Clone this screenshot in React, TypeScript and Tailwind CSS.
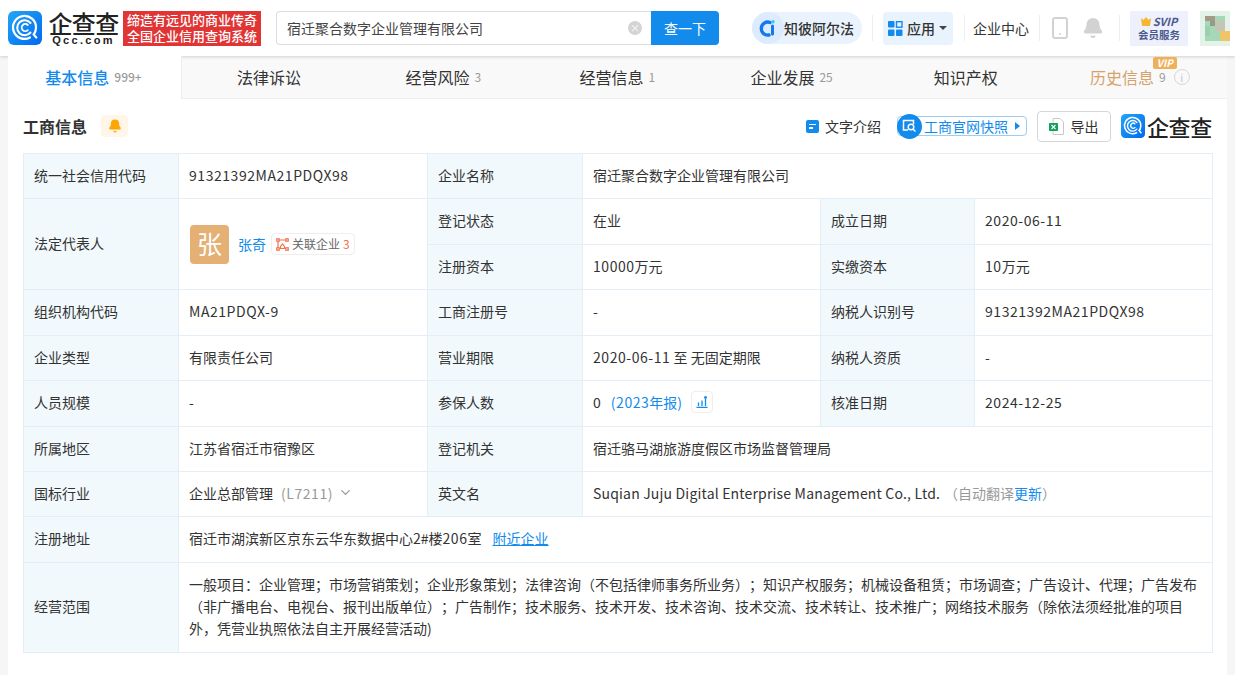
import { ReactNode } from 'react'
import { Bell, ChevronDown, Smartphone } from 'lucide-react'

const font = { fontFamily: '"Noto Sans CJK SC", sans-serif' }

function LogoMark({ size }: { size: number }) {
  return (
    <svg width={size} height={size} viewBox="0 0 34 34" className="shrink-0">
      <defs>
        <linearGradient id="qcc" x1="0" y1="0" x2="1" y2="1">
          <stop offset="0" stopColor="#22a6f5" />
          <stop offset="1" stopColor="#0069f0" />
        </linearGradient>
      </defs>
      <rect width="34" height="34" rx="6" fill="url(#qcc)" />
      <path d="M22 26.500A11.500 11.500 0 1 1 28 16.500c0 2.600-.8 5-2.300 7l2.600 3" fill="none" stroke="#fff" strokeWidth="2.200" strokeLinecap="round" />
      <path d="M22.500 21.500A7.500 7.500 0 1 1 22.500 12" fill="none" stroke="#fff" strokeWidth="2" strokeLinecap="round" />
      <path d="M19.800 19.200A3.600 3.600 0 1 1 19.800 14" fill="none" stroke="#fff" strokeWidth="1.800" strokeLinecap="round" />
    </svg>
  )
}

function Divider() {
  return <div className="h-[26px] w-px bg-[#eeeeee]" />
}

function Num({ children }: { children: ReactNode }) {
  return <span className="tracking-[0.55px]">{children}</span>
}

function Header() {
  return (
    <header className="relative flex h-14 items-center bg-white pl-2 shadow-[0_1px_3px_rgba(0,0,0,0.16)]">
      <LogoMark size={34} />
      <div className="ml-[6px] flex w-[71px] flex-col items-center text-[#222]">
        <div className="text-[24px] leading-[24px] font-medium tracking-[-0.6px] whitespace-nowrap">企查查</div>
        <div className="text-[11px] leading-[11px] font-bold tracking-[2.3px]" style={{ fontFamily: '"Liberation Sans", sans-serif' }}>Qcc.com</div>
      </div>
      <div className="ml-[4px] flex h-[35px] w-[138px] flex-col items-center justify-center bg-[#e03435] text-[13px] leading-[16px] font-medium text-white">
        <div>缔造有远见的商业传奇</div>
        <div>全国企业信用查询系统</div>
      </div>
      <div className="ml-[15px] flex h-[34px] w-[375px] items-center rounded-l border border-r-0 border-[#dddddd] pl-[10px] pr-[9px] text-sm text-[#444]">
        <span className="flex-1">宿迁聚合数字企业管理有限公司</span>
        <span className="flex h-[14px] w-[14px] items-center justify-center rounded-full bg-[#d4d4d4] text-[10px] leading-none text-white">×</span>
      </div>
      <div className="flex h-[34px] w-[68px] items-center justify-center rounded-r bg-[#128bed] text-sm text-white">查一下</div>
      <div className="ml-[33px] flex h-[32px] w-[110px] items-center rounded-full bg-[#eaf3fd]">
        <span className="flex h-[32px] w-[32px] items-center justify-center rounded-full bg-[#dcebfd]">
          <svg width="20" height="20" viewBox="0 0 20 20">
            <path d="M12 4.500A6.500 6.500 0 1 0 11 17" fill="none" stroke="#1476f0" strokeWidth="3.400" strokeLinecap="round" />
            <path d="M14.500 8v8" stroke="#1476f0" strokeWidth="3" strokeLinecap="round" />
            <circle cx="15" cy="3.800" r="1.800" fill="#2fd0e8" />
          </svg>
        </span>
        <span className="text-sm font-medium whitespace-nowrap text-[#333]">知彼阿尔法</span>
      </div>
      <div className="ml-[10px]"><Divider /></div>
      <div className="ml-[10px] flex h-[33px] w-[70px] items-center rounded bg-[#e9f3fd] pl-[5px]">
        <svg width="15" height="15" viewBox="0 0 15 15" fill="#128bed">
          <rect width="6.500" height="6.500" rx="1" />
          <rect x="8.500" y="0.700" width="5.500" height="5.500" fill="none" stroke="#128bed" strokeWidth="1.400" />
          <rect y="8.500" width="6.500" height="6.500" rx="1" />
          <rect x="8" y="8.500" width="6.500" height="6.500" rx="1" />
        </svg>
        <span className="ml-[4px] text-sm font-medium text-[#333]">应用</span>
        <span className="ml-[4px] h-0 w-0 border-x-[4px] border-t-[4px] border-x-transparent border-t-[#444]" />
      </div>
      <div className="ml-[11px]"><Divider /></div>
      <span className="ml-[8px] text-sm whitespace-nowrap text-[#333]">企业中心</span>
      <div className="ml-[10px]"><Divider /></div>
      <Smartphone className="ml-[8px] text-[#d2d2d2]" size={24} strokeWidth={2} />
      <Bell className="ml-[10px] text-[#d2d2d2]" size={22} fill="#d2d2d2" />
      <div className="ml-[15px]"><Divider /></div>
      <div className="ml-[10px] flex h-[35px] w-[58px] flex-col items-center justify-center bg-[#eef0fb] text-[#4c5b8f]">
        <div className="flex items-center gap-[2px] text-[11px] leading-[13px] font-bold italic">
          <svg width="10" height="9" viewBox="0 0 10 9"><path d="M0 1l2.500 2L5 0l2.500 3L10 1 9 9H1z" fill="#f5b72e" /></svg>
          SVIP
        </div>
        <div className="text-[10.5px] leading-[14px] font-bold">会员服务</div>
      </div>
      <svg width="30" height="35" viewBox="0 0 6 7" className="ml-[12px] blur-[0.6px]" shapeRendering="crispEdges">
        <rect width="6" height="7" fill="#e4f3ea" />
        <rect x="1" y="1" width="4" height="5" fill="#a6d8b8" />
        <rect x="1" y="1" width="2" height="1" fill="#a59a84" />
        <rect x="2" y="2" width="1" height="1" fill="#8e9d88" />
        <rect x="3" y="2" width="2" height="2" fill="#c5c5b5" />
        <rect x="1" y="3" width="1" height="2" fill="#9ccfae" />
        <rect x="4" y="4" width="2" height="2" fill="#f0c56a" />
      </svg>
    </header>
  )
}

const tabs = [
  { name: '基本信息', count: '999+' },
  { name: '法律诉讼', count: '' },
  { name: '经营风险', count: '3' },
  { name: '经营信息', count: '1' },
  { name: '企业发展', count: '25' },
  { name: '知识产权', count: '' },
  { name: '历史信息', count: '9' },
]

function Tabs() {
  return (
    <div className="flex h-[43px] border-b border-[#eeeeee] bg-[#f9f9f9]">
      {tabs.map((t, i) => (
        <div
          key={t.name}
          className={`relative flex items-center justify-center gap-[5px] text-base ${i === 0 ? '-mb-px w-[174px] shrink-0 border-r border-[#eeeeee] bg-white pb-[2px] pr-[2px] font-medium text-[#128bed]' : i === 6 ? 'flex-1 text-[#d6a26c]' : 'flex-1 text-[#333]'}`}
        >
          <span>{t.name}</span>
          {t.count && <span className="text-xs text-[#999]">{t.count}</span>}
          {i === 6 && (
            <>
              <span className="ml-[3px] flex h-4 w-4 items-center justify-center rounded-full border border-[#d8d8d8] text-[11px] leading-none text-[#c8c8c8]">i</span>
              <span className="absolute left-[100px] top-[1px] rounded-[2px] bg-[#f0b05a] px-[4px] text-[10px] leading-[12px] font-bold italic text-white">VIP</span>
            </>
          )}
        </div>
      ))}
    </div>
  )
}

function Toolbar() {
  return (
    <div className="flex h-[54px] items-center pl-[15px] pr-[15px]">
      <h2 className="text-base font-bold text-[#333]">工商信息</h2>
      <span className="ml-[14px] flex h-[22px] w-[27px] items-center justify-center rounded-sm bg-[#fff6e8]">
        <Bell size={14} className="text-[#ffa500]" fill="#ffa500" />
      </span>
      <span className="ml-auto flex h-[13px] w-[13px] flex-col justify-center gap-[2px] rounded-[2px] bg-[#128bed] pl-[3px]">
        <span className="block h-[1.500px] w-[7px] bg-white" />
        <span className="block h-[1.500px] w-[4px] bg-white" />
      </span>
      <span className="ml-[6px] text-sm text-[#333]">文字介绍</span>
      <div className="ml-[16px] flex h-[20px] w-[130px] items-center rounded-[4px] border border-[#9ccdf6] pr-[6px]">
        <span className="-ml-px flex h-[25px] w-[25px] shrink-0 items-center justify-center rounded-full bg-[#128bed]">
          <svg width="15" height="14" viewBox="0 0 15 14" fill="none" stroke="#fff" strokeWidth="1.500">
            <path d="M6 11H1.500V1.500h10V5" />
            <circle cx="9" cy="8" r="2.800" />
            <path d="M11 10l2.500 2.500" />
          </svg>
        </span>
        <span className="ml-[2px] flex-1 text-sm text-[#128bed]">工商官网快照</span>
        <span className="h-0 w-0 border-y-[4px] border-l-[5px] border-y-transparent border-l-[#128bed]" />
      </div>
      <div className="ml-[10px] flex h-[31px] w-[74px] items-center justify-center gap-[6px] rounded-sm border border-[#d6d6d6] text-sm text-[#333]">
        <svg width="15" height="17" viewBox="0 0 15 17">
          <path d="M4 .5h7l3.500 3.500v12.500H4z" fill="#fff" stroke="#c9c9c9" />
          <rect y="5" width="9" height="8" rx="1" fill="#12a05c" />
          <path d="M2.500 7l4 4M6.500 7l-4 4" stroke="#fff" strokeWidth="1.100" />
        </svg>
        导出
      </div>
      <div className="ml-[10px] flex items-center gap-[2px]">
        <LogoMark size={24} />
        <span className="text-[22px] leading-none font-medium tracking-[-0.3px] text-[#222]">企查查</span>
      </div>
    </div>
  )
}

function Label({ children, rowSpan }: { children: ReactNode; rowSpan?: number }) {
  return <td rowSpan={rowSpan} className="border border-[#e4eef6] bg-[#f2f9fc] pb-[3px] pl-[10px] pr-2 align-middle">{children}</td>
}

function Cell({ children, colSpan, rowSpan }: { children: ReactNode; colSpan?: number; rowSpan?: number }) {
  return <td colSpan={colSpan} rowSpan={rowSpan} className="border border-[#e4eef6] pb-[3px] pl-[10px] pr-2 align-middle">{children}</td>
}

function InfoTable() {
  return (
    <table className="w-[1189px] table-fixed border-collapse text-sm text-[#333] [text-spacing-trim:space-all]">
      <colgroup>
        <col className="w-[155px]" />
        <col className="w-[249px]" />
        <col className="w-[155px]" />
        <col className="w-[238px]" />
        <col className="w-[154px]" />
        <col className="w-[238px]" />
      </colgroup>
      <tbody>
        <tr className="h-[45px]">
          <Label>统一社会信用代码</Label>
          <Cell><Num>91321392MA21PDQX98</Num></Cell>
          <Label>企业名称</Label>
          <Cell colSpan={3}>宿迁聚合数字企业管理有限公司</Cell>
        </tr>
        <tr className="h-[46px]">
          <Label rowSpan={2}>法定代表人</Label>
          <Cell rowSpan={2}>
            <div className="mt-[3px] flex items-center">
              <span className="ml-px flex h-[39px] w-[39px] items-center justify-center rounded-[4px] bg-[#e5b074] text-[25px] text-white">张</span>
              <span className="ml-[9px] text-[#128bed]">张奇</span>
              <span className="ml-[5px] flex h-[22px] items-center gap-[3px] rounded-sm border border-[#eeeeee] px-[4px] text-xs whitespace-nowrap text-[#666]">
                <svg width="13" height="13" viewBox="0 0 13 13" fill="none" stroke="#f0714a" strokeWidth="1.200">
                  <rect x="0.800" y="0.800" width="2.400" height="2.400" />
                  <rect x="9.800" y="0.800" width="2.400" height="2.400" />
                  <rect x="0.800" y="9.800" width="2.400" height="2.400" />
                  <rect x="9.800" y="9.800" width="2.400" height="2.400" />
                  <path d="M3.200 2h6.600M2 3.200v6.600M6.500 6l-2 2.500v2h4v-2z" />
                </svg>
                关联企业 <span className="text-[#f0714a]">3</span>
              </span>
            </div>
          </Cell>
          <Label>登记状态</Label>
          <Cell>在业</Cell>
          <Label>成立日期</Label>
          <Cell><Num>2020-06-11</Num></Cell>
        </tr>
        <tr className="h-[45px]">
          <Label>注册资本</Label>
          <Cell><Num>10000</Num>万元</Cell>
          <Label>实缴资本</Label>
          <Cell><Num>10</Num>万元</Cell>
        </tr>
        <tr className="h-[46px]">
          <Label>组织机构代码</Label>
          <Cell><Num>MA21PDQX-9</Num></Cell>
          <Label>工商注册号</Label>
          <Cell>-</Cell>
          <Label>纳税人识别号</Label>
          <Cell><Num>91321392MA21PDQX98</Num></Cell>
        </tr>
        <tr className="h-[45px]">
          <Label>企业类型</Label>
          <Cell>有限责任公司</Cell>
          <Label>营业期限</Label>
          <Cell><Num>2020-06-11</Num> 至 无固定期限</Cell>
          <Label>纳税人资质</Label>
          <Cell>-</Cell>
        </tr>
        <tr className="h-[46px]">
          <Label>人员规模</Label>
          <Cell>-</Cell>
          <Label>参保人数</Label>
          <Cell>
            <div className="flex items-center">
              0<span className="ml-[10px] text-[#128bed]"><Num>(2023</Num>年报)</span>
              <span className="ml-[9px] flex h-[22px] w-[22px] items-center justify-center rounded-sm border border-[#eeeeee]">
                <svg width="12" height="12" viewBox="0 0 12 12" fill="none" stroke="#128bed" strokeWidth="1.300">
                  <path d="M.5 11.500h11M2.500 10V6.500M6 10V4.500M9.500 10V3" />
                  <circle cx="9.500" cy="1.500" r=".8" fill="#128bed" />
                </svg>
              </span>
            </div>
          </Cell>
          <Label>核准日期</Label>
          <Cell><Num>2024-12-25</Num></Cell>
        </tr>
        <tr className="h-[45px]">
          <Label>所属地区</Label>
          <Cell>江苏省宿迁市宿豫区</Cell>
          <Label>登记机关</Label>
          <Cell colSpan={3}>宿迁骆马湖旅游度假区市场监督管理局</Cell>
        </tr>
        <tr className="h-[45px]">
          <Label>国标行业</Label>
          <Cell>
            <div className="flex items-center">
              企业总部管理<span className="ml-[8px] text-[#999]"><Num>(L7211)</Num></span>
              <ChevronDown size={15} className="ml-[5px] text-[#999]" />
            </div>
          </Cell>
          <Label>英文名</Label>
          <Cell colSpan={3}>
            <span className="tracking-[0.18px]">Suqian Juju Digital Enterprise Management Co., Ltd.</span><span className="ml-[4px] text-[#999]">（自动翻译<span className="text-[#128bed]">更新</span>）</span>
          </Cell>
        </tr>
        <tr className="h-[46px]">
          <Label>注册地址</Label>
          <Cell colSpan={5}>
            宿迁市湖滨新区京东云华东数据中心2#楼<Num>206</Num>室<span className="ml-[11px] text-[#128bed] underline">附近企业</span>
          </Cell>
        </tr>
        <tr className="h-[90px]">
          <Label>经营范围</Label>
          <Cell colSpan={5}>
            <div className="leading-[22px]">
              一般项目：企业管理；市场营销策划；企业形象策划；法律咨询（不包括律师事务所业务）；知识产权服务；机械设备租赁；市场调查；广告设计、代理；广告发布<br />
              （非广播电台、电视台、报刊出版单位）；广告制作；技术服务、技术开发、技术咨询、技术交流、技术转让、技术推广；网络技术服务（除依法须经批准的项目<br />
              外，凭营业执照依法自主开展经营活动)
            </div>
          </Cell>
        </tr>
      </tbody>
    </table>
  )
}

export default function App() {
  return (
    <div className="h-[675px] w-[1235px] overflow-hidden bg-[#f6f6f6]" style={font}>
      <Header />
      <main className="mx-2 h-[619px] w-[1219px] bg-white">
        <Tabs />
        <Toolbar />
        <div className="pl-[15px]">
          <InfoTable />
        </div>
      </main>
    </div>
  )
}
